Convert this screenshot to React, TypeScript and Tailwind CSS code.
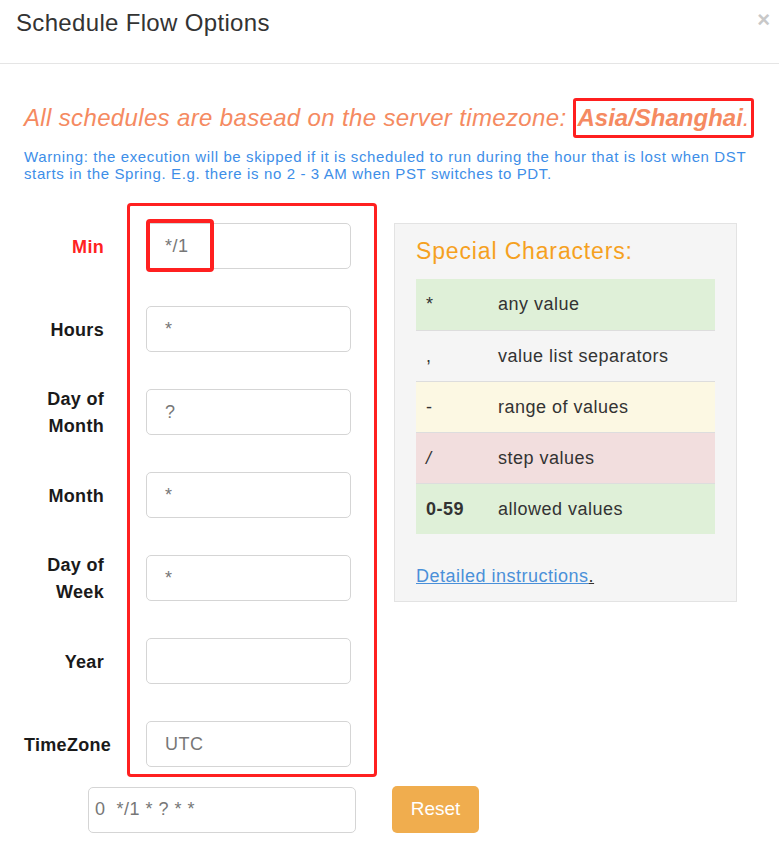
import React from "react";

const rows: { label: string[]; value: string; red?: boolean }[] = [
  { label: ["Min"], value: "*/1", red: true },
  { label: ["Hours"], value: "*" },
  { label: ["Day of", "Month"], value: "?" },
  { label: ["Month"], value: "*" },
  { label: ["Day of", "Week"], value: "*" },
  { label: ["Year"], value: "" },
  { label: ["TimeZone"], value: "UTC" },
];

const specials = [
  { k: "*", v: "any value", bg: "bg-[#dff0d8]", bold: false },
  { k: ",", v: "value list separators", bg: "bg-transparent", bold: false },
  { k: "-", v: "range of values", bg: "bg-[#fcf8e3]", bold: false },
  { k: "/", v: "step values", bg: "bg-[#f2dede]", bold: false },
  { k: "0-59", v: "allowed values", bg: "bg-[#dff0d8]", bold: true },
];

export default function App() {
  return (
    <div className="w-[779px] h-[853px] bg-white overflow-hidden font-['Liberation_Sans',Arial,sans-serif] text-[#333]">
      {/* header */}
      <div className="h-[64px] border-b border-[#e5e5e5] flex justify-between pl-4 pr-[9px] pt-[8px]">
        <div className="text-[24px] leading-[30px] tracking-[0.33px] text-[#333]">Schedule Flow Options</div>
        <div className="text-[22px] leading-[22px] font-bold text-[#c8c8c8] pt-[1px]">×</div>
      </div>

      <div className="pl-6 pt-[38px]">
        <div className="text-[24px] leading-[32px] italic tracking-[0.35px] text-[#f58a61] flex items-center">
          <span>All schedules are basead on the server timezone:&nbsp;</span>
          <span className="font-bold border-[3px] border-[#ff1f1f] rounded-[3px] px-[1px] leading-[34px] -my-[4px] tracking-normal">
            Asia/Shanghai<span className="font-normal">.</span>
          </span>
        </div>
        <div className="mt-[14px] text-[15px] leading-[17px] tracking-[0.62px] text-[#3d8ee8] pr-1">
          Warning: the execution will be skipped if it is scheduled to run during the hour that is lost when DST starts in the Spring. E.g. there is no 2 - 3 AM when PST switches to PDT.
        </div>

        <div className="flex mt-[21px]">
          {/* labels */}
          <div className="w-[80px] flex flex-col gap-[37px] pt-[21px]">
            {rows.map((r) => (
              <div key={r.label.join(" ")} className="h-[46px] flex flex-col justify-center text-right whitespace-nowrap">
                {r.label.map((l) => (
                  <div
                    key={l}
                    className={`w-full text-[18px] leading-[27px] tracking-[0.3px] font-bold ${r.red ? "text-[#ff2222]" : "text-[#1a1a1a]"}`}
                  >
                    {l}
                  </div>
                ))}
              </div>
            ))}
          </div>

          {/* red box */}
          <div className="ml-[23px] w-[250px] border-[3px] border-[#ff2020] rounded-[4px] pt-[17px] pb-[7px] pl-[16px] flex flex-col gap-[37px]">
            {rows.map((r) => (
              <div key={r.label.join(" ")} className="relative w-[205px] h-[46px] border border-[#d5d5d5] rounded-[5px] flex items-center pl-[18px] text-[18px] tracking-[0.5px] text-[#777]">
                {r.value}
                {r.red && (
                  <div className="absolute left-[-1px] top-[-5px] w-[68px] h-[53px] border-[4px] border-[#ff2020] rounded-[4px]" />
                )}
              </div>
            ))}
          </div>

          {/* special characters */}
          <div className="ml-[17px] mt-[20px] w-[343px] h-[379px] bg-[#f5f5f5] border border-[#e3e3e3] px-[21px] pt-[12px] self-start">
            <div className="text-[23px] leading-[30px] tracking-[0.85px] text-[#f5a11f]">Special Characters:</div>
            <div className="mt-[13px] w-[299px]">
              {specials.map((s, i) => (
                <div
                  key={s.v}
                  className={`h-[51px] flex items-center text-[18px] tracking-[0.5px] text-[#333] ${s.bg} ${i > 0 ? "border-t border-[#dddddd]" : ""}`}
                >
                  <div className={`w-[82px] pl-[10px] ${s.bold ? "font-bold" : ""} ${s.k === "/" ? "italic" : ""}`}>{s.k}</div>
                  <div>{s.v}</div>
                </div>
              ))}
            </div>
            <div className="mt-[30px] text-[18px] leading-[24px] tracking-[0.5px]">
              <span className="text-[#4a90d9] underline">Detailed instructions</span>
              <span className="underline text-[#333]">.</span>
            </div>
          </div>
        </div>

        {/* bottom row */}
        <div className="flex items-center mt-[9px] pl-[64px]">
          <div className="w-[268px] h-[46px] border border-[#d5d5d5] rounded-[5px] flex items-center pl-[6px] text-[18px] tracking-[0.5px] text-[#777] whitespace-pre">
            0  */1 * ? * *
          </div>
          <div className="ml-[36px] w-[87px] h-[47px] rounded-[5px] bg-[#f0ad4e] text-white text-[19px] flex items-center justify-center">
            Reset
          </div>
        </div>
      </div>
    </div>
  );
}
